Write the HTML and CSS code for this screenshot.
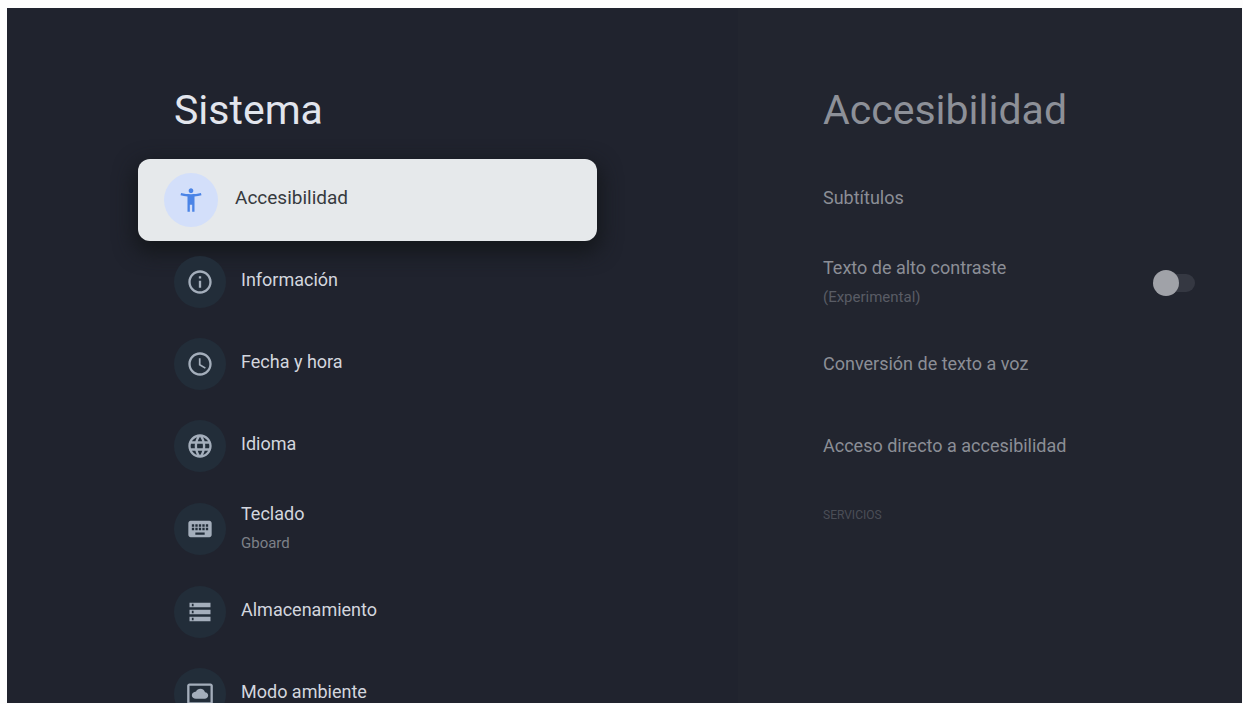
FILE: index.html
```html
<!DOCTYPE html>
<html lang="es">
<head>
    <meta charset="UTF-8">
    <meta name="viewport" content="width=device-width, initial-scale=1.0">
    <title>Sistema</title>
    <link rel="stylesheet" href="styles.css">
</head>
<body>
    <div class="screen">
        <main class="panel">
            <h1 class="title">Sistema</h1>
            <nav class="menu">
                <a href="#accesibilidad" class="item selected">
                    <span class="icon"><svg viewBox="0 0 24 24"><path d="M20.500 6c-2.610.7-5.670 1-8.500 1s-5.890-.3-8.500-1L3 8c1.860.5 4 .83 6 1v13h2v-6h2v6h2V9c2-.17 4.140-.5 6-1l-.5-2zM12 6c1.100 0 2-.9 2-2s-.9-2-2-2-2 .9-2 2 .9 2 2 2z"/></svg></span>
                    <span class="text">Accesibilidad</span>
                </a>
                <a href="#informacion" class="item">
                    <span class="icon"><svg viewBox="0 0 24 24"><path d="M11 7h2v2h-2zm0 4h2v6h-2zm1-9C6.480 2 2 6.480 2 12s4.480 10 10 10 10-4.480 10-10S17.520 2 12 2zm0 18c-4.410 0-8-3.590-8-8s3.590-8 8-8 8 3.590 8 8-3.590 8-8 8z"/></svg></span>
                    <span class="text">Información</span>
                </a>
                <a href="#fecha" class="item">
                    <span class="icon"><svg viewBox="0 0 24 24"><path d="M12 2C6.480 2 2 6.480 2 12s4.480 10 10 10 10-4.480 10-10S17.520 2 12 2zm0 18c-4.420 0-8-3.580-8-8s3.580-8 8-8 8 3.580 8 8-3.580 8-8 8zm.5-13H11v6l5.250 3.150.75-1.230-4.500-2.670z"/></svg></span>
                    <span class="text">Fecha y hora</span>
                </a>
                <a href="#idioma" class="item">
                    <span class="icon"><svg viewBox="0 0 24 24"><path d="M11.990 2C6.470 2 2 6.480 2 12s4.470 10 9.990 10C17.520 22 22 17.520 22 12S17.520 2 11.990 2zm6.930 6h-2.950c-.32-1.250-.78-2.450-1.380-3.560 1.840.63 3.370 1.910 4.330 3.560zM12 4.040c.83 1.200 1.480 2.530 1.910 3.960h-3.820c.43-1.430 1.080-2.760 1.910-3.960zM4.260 14C4.100 13.360 4 12.690 4 12s.1-1.360.26-2h3.380c-.08.660-.14 1.320-.14 2 0 .68.060 1.340.14 2H4.260zm.82 2h2.950c.32 1.250.78 2.450 1.380 3.560-1.840-.63-3.370-1.900-4.330-3.560zm2.950-8H5.080c.96-1.660 2.490-2.930 4.330-3.560C8.810 5.550 8.350 6.750 8.030 8zM12 19.960c-.83-1.200-1.480-2.530-1.910-3.960h3.820c-.43 1.430-1.080 2.760-1.910 3.960zM14.340 14H9.660c-.09-.66-.16-1.320-.16-2 0-.68.070-1.350.16-2h4.680c.09.650.16 1.320.16 2 0 .68-.07 1.340-.16 2zm.25 5.560c.6-1.110 1.060-2.310 1.380-3.560h2.950c-.96 1.650-2.490 2.930-4.330 3.560zM16.360 14c.08-.66.14-1.320.14-2 0-.68-.06-1.340-.14-2h3.380c.16.640.26 1.310.26 2s-.1 1.360-.26 2h-3.380z"/></svg></span>
                    <span class="text">Idioma</span>
                </a>
                <a href="#teclado" class="item">
                    <span class="icon"><svg viewBox="0 0 24 24"><path d="M20 5H4c-1.100 0-1.990.9-1.990 2L2 17c0 1.100.9 2 2 2h16c1.100 0 2-.9 2-2V7c0-1.100-.9-2-2-2zm-9 3h2v2h-2V8zm0 3h2v2h-2v-2zM8 8h2v2H8V8zm0 3h2v2H8v-2zm-1 2H5v-2h2v2zm0-3H5V8h2v2zm9 7H8v-2h8v2zm0-4h-2v-2h2v2zm0-3h-2V8h2v2zm3 3h-2v-2h2v2zm0-3h-2V8h2v2z"/></svg></span>
                    <span class="text double">Teclado<small class="note">Gboard</small></span>
                </a>
                <a href="#almacenamiento" class="item">
                    <span class="icon"><svg viewBox="0 0 24 24"><path d="M3 20h18v-4H3v4zm2-3h1.500v2H5v-2zM3 4v4h18V4H3zm3.500 3H5V5h1.500v2zM3 14h18v-4H3v4zm2-3h1.500v2H5v-2z"/></svg></span>
                    <span class="text">Almacenamiento</span>
                </a>
                <a href="#ambiente" class="item">
                    <span class="icon"><svg viewBox="0 0 24 24"><path d="M21 3H3c-1.100 0-2 .9-2 2v14c0 1.100.9 2 2 2h18c1.100 0 2-.9 2-2V5c0-1.100-.9-2-2-2zm0 16H3V5h18v14zM8.500 16H16c1.700 0 3-1.200 3-2.700s-1.200-2.700-2.700-2.700C16 8.800 14.300 7.500 12.300 7.500c-1.600 0-3 .9-3.700 2.300C6.600 10 5 11.300 5 13s1.600 3 3.500 3z"/></svg></span>
                    <span class="text">Modo ambiente</span>
                </a>
            </nav>
        </main>
        <aside class="panel preview">
            <h2 class="title">Accesibilidad</h2>
            <div class="menu">
                <a href="#subtitulos" class="item"><span class="text">Subtítulos</span></a>
                <label class="item" for="contraste">
                    <span class="text double">Texto de alto contraste<small class="note">(Experimental)</small></span>
                    <input type="checkbox" class="switch" id="contraste">
                </label>
                <a href="#voz" class="item"><span class="text">Conversión de texto a voz</span></a>
                <a href="#acceso" class="item"><span class="text">Acceso directo a accesibilidad</span></a>
            </div>
            <h3 class="section">SERVICIOS</h3>
        </aside>
    </div>
</body>
</html>
```
FILE: styles.css
```css
*{
    box-sizing: border-box;
}
body{
    margin: 0;
    padding: 8px 1px 1px 7px;
    background-color: #fdfdfd;
    font-family: Roboto, "Liberation Sans", sans-serif;
    font-size: 18px;
    line-height: 24px;
}
.screen{
    display: grid;
    grid-template-columns: 731fr 504fr;
    height: calc(100vh - 9px);
    overflow: hidden;
    background-color: #20232e;
}
.panel{
    padding: 78px 141px 0 131px;
    color: #d3d6de;
}
.title{
    margin: 0 0 25px;
    padding-left: 36px;
    font-size: 41px;
    line-height: 48px;
    font-weight: 400;
    color: #e2e5ed;
}
.item{
    display: flex;
    align-items: center;
    gap: 15px;
    min-height: 82px;
    padding: 12px 16px 12px 36px;
    color: inherit;
    text-decoration: none;
}
.icon{
    display: flex;
    align-items: center;
    justify-content: center;
    width: 52px;
    height: 52px;
    border-radius: 50%;
    background-color: #222d39;
}
.icon svg{
    width: 28px;
    height: 28px;
    fill: #a4aebb;
}
.text{
    flex: 1;
    padding-bottom: 4px;
}
.double{
    padding-top: 3px;
}
.note{
    display: block;
    padding-top: 5px;
    font-size: 15px;
    color: #7d8088;
}
.selected{
    gap: 17px;
    padding-left: 26px;
    border-radius: 12px;
    background-color: #e6e9eb;
    box-shadow: 0 8px 20px 4px #15181c;
    font-size: 19px;
    color: #363a3e;
}
.selected .icon{
    width: 54px;
    height: 54px;
    background-color: #d3dffa;
}
.selected .icon svg{
    fill: #4b84e6;
}

/* dimmed preview of the selected entry */
.preview{
    padding: 78px 47px 0 85px;
    background-color: #22252f;
    color: #8b8e96;
}
.preview .title{
    padding-left: 0;
    color: #8d9098;
}
.preview .item{
    padding-left: 0;
    padding-right: 0;
}
.preview .note{
    color: #595c65;
}
.section{
    margin: 0;
    padding: 14px 0;
    font-size: 12px;
    font-weight: 400;
    color: #4b4e57;
}
.switch{
    appearance: none;
    display: flex;
    align-items: center;
    width: 42px;
    height: 26px;
    margin: 0;
}
.switch::before{
    content: "";
    position: relative;
    z-index: 1;
    width: 26px;
    height: 26px;
    border-radius: 50%;
    background-color: #a0a2a8;
}
.switch::after{
    content: "";
    flex: 1;
    height: 18px;
    margin-left: -13px;
    border-radius: 9px;
    background-color: #353842;
}
```
